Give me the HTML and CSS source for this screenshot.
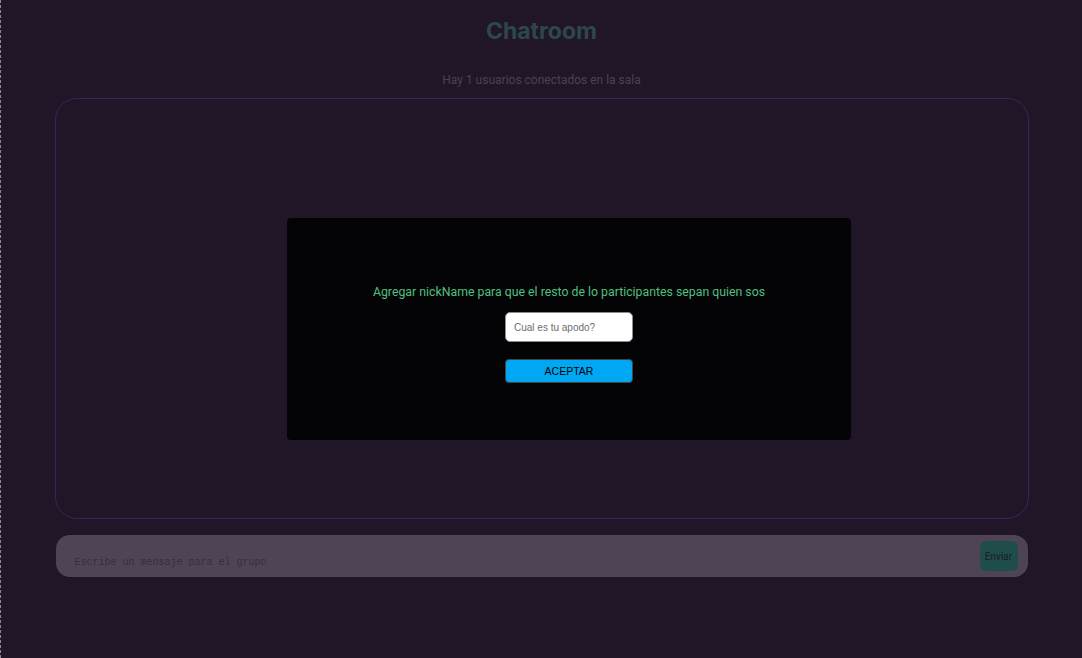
FILE: index.html
```html
<!DOCTYPE html>
<html lang="es">
<head>
<meta charset="utf-8">
<title>Chatroom</title>
<link rel="stylesheet" href="styles.css">
</head>
<body>
  <div class="page">
    <h1 class="title">Chatroom</h1>
    <p class="users">Hay 1 usuarios conectados en la sala</p>
    <div class="chatbox"></div>
    <form class="composer">
      <input class="msg" type="text" placeholder="Escribe un mensaje para el grupo">
      <button class="send" type="button">Enviar</button>
    </form>
  </div>
  <div class="modal">
    <p class="modal-text">Agregar nickName para que el resto de lo participantes sepan quien sos</p>
    <input class="nick" type="text" placeholder="Cual es tu apodo?">
    <button class="accept" type="button">ACEPTAR</button>
  </div>
</body>
</html>
```

FILE: styles.css
```css
html {
  background: #211627;
  border-left: 1px dashed #8a8a8a;
  min-height: 100%;
  box-sizing: border-box;
}
body {
  margin: 0;
  font-family: Roboto, "Noto Sans", sans-serif;
  height: 658px;
  overflow: hidden;
}
.page {
  display: flex;
  flex-direction: column;
  align-items: center;
}
.title {
  margin: 17px 0 0;
  font-family: Inter, Roboto, sans-serif;
  font-size: 23px;
  line-height: 29px;
  font-weight: 700;
  color: #2d4849;
}
.users {
  margin: 26px 0 0;
  font-size: 12px;
  line-height: 16px;
  color: #4c4153;
}
.chatbox {
  margin-top: 10px;
  width: 974px;
  height: 421px;
  box-sizing: border-box;
  border: 1px solid #33275a;
  border-radius: 22px;
}
.composer {
  margin-top: 16px;
  width: 972px;
  height: 42px;
  box-sizing: border-box;
  background: #4f4456;
  border-radius: 14px;
  display: flex;
  align-items: center;
  padding: 0 10px 0 19px;
  gap: 8px;
}
.msg {
  flex: 1;
  background: transparent;
  border: none;
  outline: none;
  font-family: "Liberation Mono", "Courier New", monospace;
  font-size: 10px;
  padding: 13px 0 0;
  color: #3a3040;
}
.msg::placeholder { color: #382d3e; }
.send {
  width: 38px;
  height: 30px;
  background: #1f4e4a;
  border: none;
  border-radius: 6px;
  font-family: Roboto, "Noto Sans", sans-serif;
  font-size: 10px;
  color: #1d1a24;
  padding: 0;
}
.modal {
  position: absolute;
  left: 287px;
  top: 218px;
  width: 564px;
  height: 222px;
  box-sizing: border-box;
  background: #040406;
  border-radius: 4px;
  display: flex;
  flex-direction: column;
  align-items: center;
  padding-top: 66px;
}
.modal-text {
  margin: 0;
  font-size: 12.3px;
  line-height: 17px;
  color: #4fc07f;
}
.nick {
  margin-top: 11px;
  width: 128px;
  height: 30px;
  box-sizing: border-box;
  border: 1px solid #8d8d8d;
  border-radius: 5px;
  background: #fff;
  font-family: "Liberation Sans", Arial, sans-serif;
  font-size: 10px;
  padding: 0 8px;
}
.nick::placeholder { color: #6e6e6e; }
.accept {
  margin-top: 17px;
  width: 128px;
  height: 24px;
  box-sizing: border-box;
  background: #00a8f3;
  border: 1px solid #444;
  border-radius: 4px;
  font-family: "Liberation Sans", Arial, sans-serif;
  font-size: 10.5px;
  color: #000;
  padding: 0;
}
```
